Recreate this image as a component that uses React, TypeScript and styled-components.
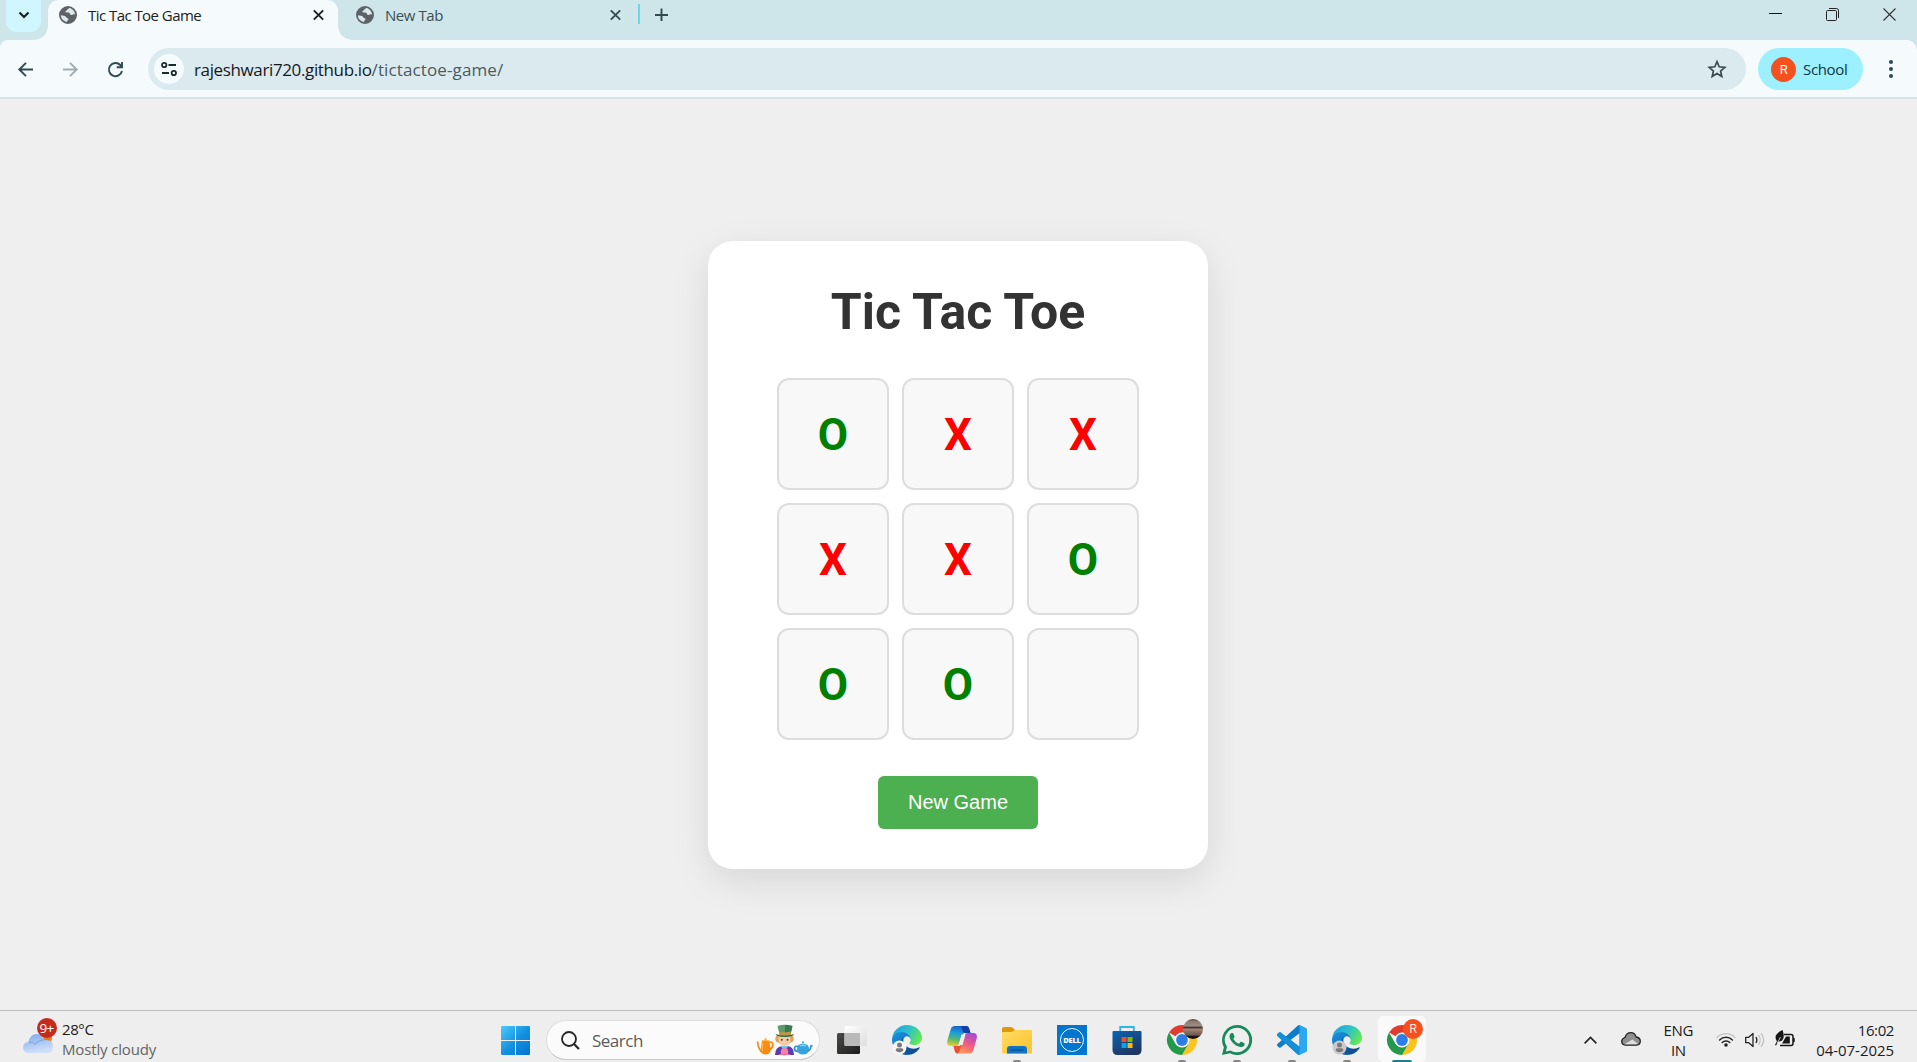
import React from "react";
import styled, { createGlobalStyle } from "styled-components";

const GlobalStyle = createGlobalStyle`
  * { box-sizing: border-box; }
  body { margin: 0; background: #efefef; overflow: hidden; }
  button { border: 0; background: none; padding: 0; margin: 0; font: inherit; }
  svg { display: block; flex: none; overflow: visible; }
`;

const ui = `"Segoe UI", "Open Sans", "Noto Sans", sans-serif`;

const Screen = styled.div`
  width: 1917px;
  height: 1062px;
  display: grid;
  grid-template-rows: 40px 59px 1fr 52px;
  font-family: ${ui};
  overflow: hidden;
`;

/* Browser chrome */
const TabStrip = styled.header`
  display: flex;
  background: #cee6ea;
`;
const TabSearch = styled.button`
  width: 35px;
  height: 32px;
  margin: 0 7px 0 6px;
  border-radius: 0 0 11px 11px;
  background: #d0f6ff;
  display: grid;
  place-items: center;
  padding-bottom: 2px;
`;
const Tab = styled.div<{ $active?: boolean }>`
  position: relative;
  display: flex;
  align-items: flex-start;
  width: ${(p) => (p.$active ? 290 : 298)}px;
  height: 40px;
  padding: ${(p) => (p.$active ? "6px 14px 0 11px" : "6px 15px 0 18px")};
  background: ${(p) => (p.$active ? "#f5fafd" : "transparent")};
  border-radius: 11px 11px 0 0;
  color: ${(p) => (p.$active ? "#1b2224" : "#3b4f53")};
  &::before,
  &::after {
    content: ${(p) => (p.$active ? '""' : "none")};
    position: absolute;
    bottom: 0;
    width: 14px;
    height: 14px;
  }
  &::before {
    left: -14px;
    background: radial-gradient(circle at 0 0, transparent 13.5px, #f5fafd 14px);
  }
  &::after {
    right: -14px;
    background: radial-gradient(circle at 100% 0, transparent 13.5px, #f5fafd 14px);
  }
`;
const TabTitle = styled.span<{ $spacing: number }>`
  flex: 1;
  margin-left: 11px;
  font-size: 15px;
  line-height: 18px;
  letter-spacing: ${(p) => p.$spacing}px;
  white-space: nowrap;
`;
const CloseSlot = styled.span`
  padding-top: 4px;
`;
const Divider = styled.span`
  width: 2px;
  height: 20px;
  margin: 4px 15px 0 2px;
  background: #71d5e8;
`;
const PlusSlot = styled.span`
  padding-top: 8px;
`;
const WindowButtons = styled.div`
  display: flex;
  gap: 44px;
  margin-left: auto;
  padding: 8px 21px 0 0;
`;
const Toolbar = styled.nav`
  display: flex;
  align-items: center;
  height: 59px;
  padding: 1px 21px 0 18px;
  background: #f5fafd;
  border-bottom: 2px solid #d8e5e8;
  border-radius: 8px 11px 0 0;
`;
const ToolbarBack = styled.div`
  background: #cee6ea;
`;
const NavIcons = styled.div`
  display: flex;
  align-items: center;
  gap: 30px;
  margin-right: 25px;
`;
const AddressBar = styled.div`
  display: flex;
  align-items: center;
  width: 1598px;
  height: 42px;
  padding: 0 19px 0 6px;
  border-radius: 21px;
  background: #dbeaef;
`;
const SiteButton = styled.span`
  display: grid;
  place-items: center;
  width: 30px;
  height: 30px;
  border-radius: 50%;
  background: #f5fafd;
`;
const Url = styled.span`
  flex: 1;
  margin-left: 10px;
  padding-top: 1px;
  font-size: 17px;
  letter-spacing: -0.37px;
  color: #15191b;
  span {
    color: #4b5a5e;
    letter-spacing: 0.12px;
  }
`;
const Profile = styled.button`
  display: flex;
  align-items: center;
  width: 105px;
  height: 42px;
  margin: 0 auto 0 12px;
  padding-left: 13px;
  border-radius: 21px;
  background: #9df0ff;
  color: #0c3840;
  font-size: 15px;
  letter-spacing: -0.35px;
`;
const Avatar = styled.span`
  display: grid;
  place-items: center;
  width: 25px;
  height: 25px;
  margin-right: 7px;
  border-radius: 50%;
  background: #f4511e;
  color: #fff;
  font: 13px Roboto, sans-serif;
`;

/* Game */
const Page = styled.main`
  display: flex;
  justify-content: center;
  align-items: flex-start;
  padding: 142px 1px 0 0;
  background: #efefef;
`;
const Card = styled.section`
  display: flex;
  flex-direction: column;
  align-items: center;
  width: 500px;
  height: 628px;
  padding-top: 39px;
  border-radius: 25px;
  background: #fff;
  box-shadow: 0 12px 38px rgba(0, 0, 0, 0.1);
`;
const Title = styled.h1`
  margin: 0 0 33px;
  font: 700 50px/65px Roboto, sans-serif;
  color: #333;
`;
const Board = styled.div`
  display: grid;
  grid-template-columns: repeat(3, 112px);
  grid-auto-rows: 112px;
  gap: 13px;
`;
const Cell = styled.div<{ $mark: string }>`
  display: grid;
  place-items: center;
  padding-top: 2px;
  border: 2px solid #ddd;
  border-radius: 12px;
  background: #f8f8f8;
  color: ${(p) => (p.$mark === "X" ? "#ff0000" : "#008000")};
  font: 700 44px/52px Roboto, sans-serif;
`;
const NewGame = styled.button`
  width: 160px;
  height: 53px;
  margin-top: 36px;
  border-radius: 6px;
  background: #4caf50;
  color: #fff;
  font: 20px "Liberation Sans", Arial, sans-serif;
`;

/* Taskbar */
const Taskbar = styled.footer`
  display: flex;
  height: 52px;
  border-top: 1px solid #bcbcbc;
  background: #eee;
  overflow: hidden;
`;
const Weather = styled.div`
  display: flex;
  width: 501px;
  padding: 7px 0 0 23px;
`;
const Stack = styled.div<{ $align?: string }>`
  display: flex;
  flex-direction: column;
  padding-top: 1px;
  text-align: ${(p) => p.$align ?? "left"};
  color: #1c1c1c;
`;
const Line = styled.span<{ $spacing?: number; $muted?: boolean }>`
  font-size: 15px;
  line-height: 20px;
  letter-spacing: ${(p) => p.$spacing ?? 0}px;
  color: ${(p) => (p.$muted ? "#646464" : "#1c1c1c")};
  white-space: nowrap;
`;
const WeatherIcon = styled.div`
  position: relative;
  width: 31px;
  margin-right: 8px;
`;
const Count = styled.span`
  position: absolute;
  left: 13.5px;
  top: 0;
  width: 20px;
  height: 20px;
  border-radius: 50%;
  background: #c42b1c;
  color: #fff;
  font-size: 13.5px;
  line-height: 20px;
  letter-spacing: -0.7px;
  text-align: center;
`;
const StartSlot = styled.div`
  padding-top: 15px;
`;
const SearchBox = styled.div`
  display: flex;
  align-items: center;
  width: 274px;
  height: 40px;
  margin: 9px 5px 0 16px;
  padding: 0 6px 0 14px;
  border: 1px solid #dcdcdc;
  border-bottom-color: #c8c8c8;
  border-radius: 20px;
  background: #fbfbfb;
`;
const SearchLabel = styled.span`
  flex: 1;
  margin-left: 12px;
  font-size: 17px;
  letter-spacing: -0.5px;
  color: #5c5c5c;
`;
const Apps = styled.div`
  display: flex;
  gap: 7px;
  margin-left: 3px;
`;
const AppButton = styled.div<{ $active?: boolean }>`
  position: relative;
  display: flex;
  justify-content: center;
  width: 48px;
  height: 46px;
  margin-top: 5px;
  padding-top: 9px;
  border-radius: 5px;
  background: ${(p) => (p.$active ? "#f9f9f9" : "transparent")};
`;
const Running = styled.i<{ $active?: boolean }>`
  position: absolute;
  bottom: 0;
  left: 50%;
  height: 2px;
  width: ${(p) => (p.$active ? 20 : 8)}px;
  transform: translateX(-50%);
  border-radius: 2px 2px 0 0;
  background: ${(p) => (p.$active ? "#1d7f8c" : "#868686")};
`;
const AppBadge = styled.span<{ $photo?: boolean }>`
  position: absolute;
  left: 25px;
  top: 3px;
  width: 20px;
  height: 20px;
  border-radius: 50%;
  background: ${(p) =>
    p.$photo
      ? "linear-gradient(#4b413f 0, #8d7a72 12%, #a58d82 36%, #34333a 40%, #3c4048 45%, #b58468 50%, #8b7569 62%, #6d5a50 80%, #16110f 88%)"
      : "#f4511e"};
  color: #ffe4da;
  font: 12.5px/20px Roboto, sans-serif;
  text-align: center;
`;
const Tray = styled.div`
  display: flex;
  margin-left: auto;
  padding: 8px 23px 0 0;
`;
const TraySlot = styled.div<{ $top: number; $right: number }>`
  padding-top: ${(p) => p.$top}px;
  margin-right: ${(p) => p.$right}px;
`;

const Globe = () => (
  <svg width="18" height="18" viewBox="0 0 18 18">
    <circle cx="9" cy="9" r="8.1" fill="#dce9ec" stroke="#5d6267" strokeWidth="1.8" />
    <path d="M1 9C1 5 4 1.4 9 1l1 .1c.4 1.2-.5 1.9-1.700 2.300-.4 1.300-1.900 1-1.900 2.300 0 1 2.400.5 3.800 1.100 1.100.5.5 1.900 1.800 2.100 1.600.2 2.600-.9 4.500-.5C17 13 14 16.500 10 17l-2-.3c-.2-1.600.6-2 1.500-3.100-.1-1.500-1.600-1.300-2.200-2.400C6.500 9.600 4 9.900 1 9z" fill="#5d6267" />
  </svg>
);
const Cross = ({ c, w = 1.9 }: { c: string; w?: number }) => (
  <svg width="11" height="11" viewBox="0 0 11 11">
    <path d="M.8.3l9.400 9.400M10.200.3L.8 9.700" stroke={c} strokeWidth={w} />
  </svg>
);

const Edge = ({ id, dark }: { id: string; dark?: boolean }) => (
  <svg width="30" height="30" viewBox="0 0 30 30">
    <defs>
      <linearGradient id={id + "a"} x1="0" y1=".2" x2="1" y2=".6">
        <stop offset="0" stopColor="#1f9fe0" />
        <stop offset=".5" stopColor="#2fc2c8" />
        <stop offset="1" stopColor="#66e84f" />
      </linearGradient>
      <linearGradient id={id + "b"} x1=".2" y1="0" x2=".6" y2="1">
        <stop offset="0" stopColor="#1b93dd" />
        <stop offset="1" stopColor="#0f5fb5" />
      </linearGradient>
      <linearGradient id={id + "c"} x1="0" y1="0" x2="1" y2="0">
        <stop offset="0" stopColor="#0c59a4" />
        <stop offset="1" stopColor="#114a8b" />
      </linearGradient>
    </defs>
    <g transform="scale(.1172)">
      <path transform="translate(-4.600 -4.900)" d="M235.680 195.460a93.730 93.730 0 0 1-10.540 4.710 101.870 101.870 0 0 1-35.900 6.460c-47.320 0-88.540-32.550-88.540-74.320A31.480 31.480 0 0 1 117.130 105c-42.800 1.800-53.800 46.400-53.800 72.530 0 73.880 68.090 81.370 82.760 81.370 7.910 0 19.840-2.300 27-4.560l1.310-.44a128.340 128.340 0 0 0 66.600-52.800 4 4 0 0 0-5.320-5.640z" fill={`url(#${id}c)`} />
      <path d="M105.730 241.380A79.200 79.200 0 0 1 83 220.080a80.720 80.720 0 0 1 29.450-120c3.120-1.470 8.450-4.130 15.540-4a32.350 32.350 0 0 1 25.690 13 31.880 31.880 0 0 1 6.360 18.660c0-.21 24.460-79.600-80-79.600-43.900 0-80 41.660-80 78.210a130.150 130.150 0 0 0 12.110 56 128 128 0 0 0 156.380 67.110 75.550 75.550 0 0 1-62.780-8z" fill={`url(#${id}b)`} />
      <path d="M152.330 148.860c-.81 1.050-3.300 2.500-3.300 5.660 0 2.610 1.700 5.120 4.720 7.230 14.380 10 41.490 8.680 41.560 8.680a59.560 59.560 0 0 0 30.270-8.350 61.380 61.380 0 0 0 30.430-52.880c.26-22.410-8-37.310-11.340-43.910C223.460 23.840 177.720 0 128 0A128 128 0 0 0 0 126.200c.48-36.540 36.800-66.050 80-66.050 3.500 0 23.460.34 42 10.070 16.340 8.580 24.900 18.940 30.850 29.210 6.180 10.670 7.280 24.150 7.280 29.520s-2.740 13.330-7.800 19.910z" fill={`url(#${id}a)`} />
    </g>
    <circle cx="7.500" cy="22.500" r="7" fill={dark ? "#cacaca" : "#f6f6f6"} />
    <circle cx="7.500" cy="20" r="2.500" fill="#7c7c7c" />
    <path d="M3.700 25c0-1.300.8-1.800 2-1.800h3.600c1.200 0 2 .5 2 1.800 0 1.200-1.500 2.200-3.800 2.200s-3.800-1-3.800-2.200z" fill="#7c7c7c" />
  </svg>
);
const Chrome = () => (
  <svg width="30" height="30" viewBox="0 0 30 30">
    <path d="M15 15L2.010 7.500A15 15 0 0 1 27.990 7.500z" fill="#e33b2e" />
    <path d="M15 7.500H28a15 15 0 0 1-13 22.500l6.500-11.250z" fill="#fcc31e" />
    <path d="M8.500 18.750L2 7.500A15 15 0 0 0 15 30l6.500-11.250z" fill="#229a49" />
    <circle cx="15" cy="15" r="7.500" fill="#fff" />
    <circle cx="15" cy="15" r="5.900" fill="#2d7de9" />
  </svg>
);
const TaskView = () => (
  <svg width="30" height="30" viewBox="0 0 30 30">
    <defs>
      <linearGradient id="tv1" x2="1" y2="1"><stop stopColor="#4a4a48" /><stop offset="1" stopColor="#1c1c1c" /></linearGradient>
      <linearGradient id="tv2" x2="1" y2="1"><stop stopColor="#fff" /><stop offset="1" stopColor="#dedede" /></linearGradient>
    </defs>
    <rect x="0" y="8" width="23" height="21" rx="1.500" fill="url(#tv1)" />
    <rect x="7.500" y="1" width="22.500" height="20" rx="1.500" fill="url(#tv2)" />
    <path d="M7.500 8H23v13H9q-1.500 0-1.500-1.500z" fill="#b9b9b9" />
  </svg>
);
const Copilot = () => (
  <svg width="30" height="30" viewBox="0 0 30 30">
    <defs>
      <linearGradient id="cp1" x1=".4" y1="0" x2=".2" y2="1"><stop stopColor="#1764d0" /><stop offset=".35" stopColor="#1aa0d5" /><stop offset=".65" stopColor="#55b872" /><stop offset="1" stopColor="#f2d024" /></linearGradient>
      <linearGradient id="cp2" x1=".8" y1="0" x2=".3" y2="1"><stop stopColor="#a14ad8" /><stop offset=".5" stopColor="#ee5a86" /><stop offset="1" stopColor="#ffa04e" /></linearGradient>
    </defs>
    <path d="M8 1h11c2 0 2.700 1 3.300 3l1.200 4h-5c-2 0-3 1-3.600 3l-2 6.500c-.7 2.500-1.600 3.500-4 3.500H4c-3.300 0-4.500-2.200-3.700-5.500L3.500 5C4.300 2 5.500 1 8 1z" fill="url(#cp1)" />
    <path d="M14 1h5c2 0 2.700 1 3.300 3l1.200 4h-5c-2 0-2.500-.8-3-2.500z" fill="#173fa8" />
    <path d="M22 28.500H11c-2 0-2.700-1-3.300-3L6.500 21h5c2 0 3-1 3.600-3l2-6.500c.7-2.500 1.600-3.500 4-3.500H26c3.300 0 4.500 2.200 3.700 5.500L26.500 24.500c-.8 3-2 4-4.500 4z" fill="url(#cp2)" />
    <path d="M6.500 21h5c1.500 0 2.500-.6 3.200-1.800L12.500 26c-.6 1.800-1.300 2.500-2.500 2.400-1.300-.2-1.900-1.200-2.300-2.900z" fill="#e8503a" />
    <path d="M14.500 9.500h4L15.500 20h-4z" fill="#eee" />
  </svg>
);
const Folder = () => (
  <svg width="30" height="30" viewBox="0 0 30 30">
    <defs><linearGradient id="fd" x2="1" y2="1"><stop stopColor="#ffdc65" /><stop offset="1" stopColor="#fcc22b" /></linearGradient></defs>
    <path d="M0 4q0-2 2-2h7q1 0 1.700.8L13 5v6H0z" fill="#dc9a09" />
    <path d="M0 8q0-1 1-1h8.500L13 5h16q1 0 1 1v21q0 1.500-1.500 1.500h-27Q0 28.500 0 27z" fill="url(#fd)" />
    <path d="M5 28.500V24q0-3 3-3h14q3 0 3 3v4.500z" fill="#1173c4" />
    <path d="M8.500 25h13" stroke="#0b4f91" strokeWidth="1.300" />
  </svg>
);
const DellTile = styled.span`
  display: grid;
  place-items: center;
  width: 30px;
  height: 30px;
  background: #0076ce;
`;
const DellRing = styled.span`
  display: grid;
  place-items: center;
  width: 24px;
  height: 24px;
  border: 1.4px solid #e8f5ff;
  border-radius: 50%;
  color: #fff;
  font: 800 7.5px/22px "Open Sans", sans-serif;
  letter-spacing: -0.2px;
`;
const Store = () => (
  <svg width="30" height="30" viewBox="0 0 30 30">
    <defs><linearGradient id="st" x2=".6" y2="1"><stop stopColor="#0864b4" /><stop offset="1" stopColor="#20355f" /></linearGradient></defs>
    <path d="M8.200 6.500V2h13.600v4.500" fill="none" stroke="#2bb5ec" strokeWidth="1.800" />
    <path d="M.5 7q0-1 1-1h27q1 0 1 1v18q0 5-5 5h-19q-5 0-5-5z" fill="url(#st)" />
    <path d="M9.500 12h5v5h-5z" fill="#f25022" /><path d="M15.500 12h5v5h-5z" fill="#7fba00" />
    <path d="M9.500 18h5v5h-5z" fill="#00a4ef" /><path d="M15.500 18h5v5h-5z" fill="#ffb900" />
  </svg>
);
const WhatsApp = () => (
  <svg width="30" height="30" viewBox="0 0 24 24" fill="#17895a">
    <path d="M17.472 14.382c-.297-.149-1.758-.867-2.030-.967-.273-.099-.471-.148-.67.150-.197.297-.767.966-.940 1.164-.173.199-.347.223-.644.075-.297-.150-1.255-.463-2.390-1.475-.883-.788-1.480-1.761-1.653-2.059-.173-.297-.018-.458.130-.606.134-.133.298-.347.446-.520.149-.174.198-.298.298-.497.099-.198.050-.371-.025-.520-.075-.149-.669-1.612-.916-2.207-.242-.579-.487-.500-.669-.510-.173-.008-.371-.010-.570-.010-.198 0-.520.074-.792.372-.272.297-1.040 1.016-1.040 2.479 0 1.462 1.065 2.875 1.213 3.074.149.198 2.096 3.200 5.077 4.487.709.306 1.262.489 1.694.625.712.227 1.360.195 1.871.118.571-.085 1.758-.719 2.006-1.413.248-.694.248-1.289.173-1.413-.074-.124-.272-.198-.570-.347" />
    <path fillRule="evenodd" d="M12 0a12 12 0 0 0-10.500 17.800L0 24l6.300-1.500A12 12 0 1 0 12 0zm0 2.200a9.800 9.800 0 1 1-5.200 18.100l-3.700.9.900-3.600A9.800 9.800 0 0 1 12 2.200z" />
  </svg>
);
const VSCode = () => (
  <svg width="30" height="30" viewBox="0 0 24 24">
    <path d="M23.150 2.587L18.210.21a1.494 1.494 0 0 0-1.705.29l-9.460 8.630-4.120-3.128a.999.999 0 0 0-1.276.057L.327 7.261A1 1 0 0 0 .326 8.740L3.899 12 .326 15.260a1 1 0 0 0 .001 1.479L1.650 17.940a.999.999 0 0 0 1.276.057l4.120-3.128 9.460 8.630a1.492 1.492 0 0 0 1.704.29l4.942-2.377A1.500 1.500 0 0 0 24 20.060V3.939a1.500 1.500 0 0 0-.85-1.352zm-5.146 14.861L10.826 12l7.178-5.448v10.896z" fill="#0c7dc8" />
    <path d="M3.900 12L.33 8.740a1 1 0 0 1 0-1.480L1.650 6.060a1 1 0 0 1 1.280-.06L18 17.450V23.800q-.8 0-1.500-.3z" fill="#1590d8" />
    <path d="M18.210.21l4.940 2.377A1.500 1.500 0 0 1 24 3.940v16.120a1.500 1.500 0 0 1-.85 1.350l-4.940 2.380q-.9.300-1.500-.2 1.300.3 1.300-1.100V1.500q0-1.200-1.300-1.100.6-.5 1.500-.19z" fill="#2ba8f2" />
  </svg>
);
const Hatter = () => (
  <svg width="56" height="32" viewBox="0 0 56 32">
    <path d="M5.500 17.300h6M8.500 15v1" stroke="#ffb02e" strokeWidth="2" strokeLinecap="round" />
    <path d="M4.800 18q3.700-2 7.400 0l1.800 7.500q-.8 5-5.500 5T3.500 26z" fill="#f98a12" />
    <path d="M6 19q-1.500 4-.5 8" fill="none" stroke="#ffb84a" strokeWidth="1.400" />
    <path d="M4.500 28Q1 24 .6 17.500M12.500 25.500q4.500-2 3-6.500-1.800-2-3.500 0" fill="none" stroke="#f98a12" strokeWidth="1.700" />
    <path d="M18 31q0-8 7-9h6q6 1 6 9z" fill="#5b3bb0" />
    <path d="M23.500 22h8l-4 5z" fill="#6cc8e8" />
    <path d="M19.500 18q-3-4 1-7h14q4 3 1 7l-3 1H22z" fill="#e3a34c" />
    <path d="M21.500 12h12v6q-1.500 4-6 4t-6-4z" fill="#f7c9a5" />
    <path d="M20.500 2q7-2.500 15 0l-2 8.500H22.500z" fill="#5b9b6c" />
    <path d="M28 1q4 0 7.500 1l-2 8.500H28z" fill="#367a50" />
    <path d="M22 7.500q6 1.500 12 0l-.5 3.500h-11z" fill="#bc9645" />
    <path d="M18.500 10q9 3 18.500 0-.5 3-9 3t-9.500-3z" fill="#286849" />
    <circle cx="24.800" cy="15.800" r="1" fill="#31505b" /><circle cx="30.500" cy="15.800" r="1" fill="#31505b" />
    <circle cx="27.500" cy="27.800" r="3.800" fill="#f780a5" />
    <path d="M22 30.500h11" stroke="#f06a96" strokeWidth="1" />
    <path d="M41.500 21q4.500-3 9 0 1.800 1.800 1.500 4.500-.5 5-6 5t-6-5q0-3 1.500-4.500z" fill="#35a3de" />
    <path d="M43 22q3-1.500 6 0" fill="none" stroke="#8ed5f4" strokeWidth="1.300" />
    <path d="M41.500 22.500q-4-1-4 2t3.500 3M51 27q2.500-1 3-5l1.500-.5M46 17.500V19" fill="none" stroke="#2d8ed0" strokeWidth="1.700" />
  </svg>
);

const board = ["O", "X", "X", "X", "X", "O", "O", "O", ""];

export default function App() {
  return (
    <Screen>
      <GlobalStyle />
      <TabStrip>
        <TabSearch>
          <svg width="12" height="8" viewBox="0 0 12 8"><path d="M1.500 1.500L6 6l4.500-4.500" fill="none" stroke="#162124" strokeWidth="2.200" /></svg>
        </TabSearch>
        <Tab $active>
          <Globe />
          <TabTitle $spacing={-0.55}>Tic Tac Toe Game</TabTitle>
          <CloseSlot><Cross c="#1b2224" /></CloseSlot>
        </Tab>
        <Tab>
          <Globe />
          <TabTitle $spacing={-0.45}>New Tab</TabTitle>
          <CloseSlot><Cross c="#344c50" /></CloseSlot>
        </Tab>
        <Divider />
        <PlusSlot>
          <svg width="13" height="13" viewBox="0 0 13 13"><path d="M6.500.5v12.500M0 7h13" stroke="#304a4f" strokeWidth="1.900" /></svg>
        </PlusSlot>
        <WindowButtons>
          <svg width="13" height="13" viewBox="0 0 13 13"><path d="M0 5.500h13" stroke="#111" /></svg>
          <svg width="13" height="13" viewBox="0 0 13 13" fill="none" stroke="#222">
            <rect x=".5" y="2.500" width="10" height="10" rx="1" />
            <path d="M3 .5h7.500q2 0 2 2V10" />
          </svg>
          <svg width="13" height="13" viewBox="0 0 13 13"><path d="M.5.5l12 12M12.500.5l-12 12" stroke="#333" strokeWidth="1.100" /></svg>
        </WindowButtons>
      </TabStrip>
      <ToolbarBack>
        <Toolbar>
          <NavIcons>
            <svg width="15" height="15" viewBox="0 0 15 15" fill="none" stroke="#2f4a50" strokeWidth="1.900"><path d="M15 7.500H1.500M8 .8L1.300 7.500 8 14.200" /></svg>
            <svg width="15" height="15" viewBox="0 0 15 15" fill="none" stroke="#a1acb0" strokeWidth="1.900"><path d="M0 7.500h13.500M7 .8l6.700 6.700L7 14.200" /></svg>
            <svg width="15" height="15" viewBox="0 0 15 15" fill="none" stroke="#2f4a50" strokeWidth="1.900"><path d="M14 9A6.600 6.600 0 1 1 12.300 3L14 4.700M14 0v5.300H8.700" /></svg>
          </NavIcons>
          <AddressBar>
            <SiteButton>
              <svg width="16" height="14" viewBox="0 0 16 14" fill="none" stroke="#1b2a2d" strokeWidth="1.800">
                <circle cx="3.200" cy="3" r="2.200" /><path d="M7.500 3H15M1 11h7" /><circle cx="12.800" cy="11" r="2.200" />
              </svg>
            </SiteButton>
            <Url>rajeshwari720.github.io<span>/tictactoe-game/</span></Url>
            <svg width="20" height="20" viewBox="0 0 20 20"><path d="M10 2.600l2.200 5.200 5.600.5-4.200 3.700 1.200 5.500-4.800-2.900-4.800 2.900 1.200-5.500-4.200-3.700 5.600-.5z" fill="none" stroke="#3b4b50" strokeWidth="1.700" /></svg>
          </AddressBar>
          <Profile><Avatar>R</Avatar>School</Profile>
          <svg width="10" height="18" viewBox="0 0 10 18" fill="#2f4a50"><circle cx="5" cy="2" r="2" /><circle cx="5" cy="9" r="2" /><circle cx="5" cy="16" r="2" /></svg>
        </Toolbar>
      </ToolbarBack>

      <Page>
        <Card>
          <Title>Tic Tac Toe</Title>
          <Board>
            {board.map((mark, i) => <Cell key={i} $mark={mark}>{mark}</Cell>)}
          </Board>
          <NewGame>New Game</NewGame>
        </Card>
      </Page>

      <Taskbar>
        <Weather>
          <WeatherIcon>
            <svg width="31" height="36" viewBox="0 0 31 36">
              <defs><linearGradient id="wc" x2=".3" y2="1"><stop stopColor="#7ba9ea" /><stop offset="1" stopColor="#cfdffa" /></linearGradient></defs>
              <circle cx="24" cy="20" r="5" fill="#f27a1a" />
              <path d="M6 35q-6-.5-6-5.500t5.500-5.500Q7 16 14 16q6 0 7.500 6 9-1 8.500 7 0 6-6 6z" fill="url(#wc)" />
              <path d="M5.500 24q5-.5 7 2.500 3-5 9-4.500" fill="none" stroke="#6b97df" strokeWidth=".8" />
            </svg>
            <Count>9+</Count>
          </WeatherIcon>
          <Stack>
            <Line $spacing={-0.4}>28°C</Line>
            <Line $spacing={-0.15} $muted>Mostly cloudy</Line>
          </Stack>
        </Weather>
        <StartSlot>
          <svg width="29" height="29" viewBox="0 0 29 29">
            <defs><linearGradient id="ws" gradientUnits="userSpaceOnUse" x1="0" y1="0" x2="29" y2="29"><stop stopColor="#4ccbfd" /><stop offset=".5" stopColor="#1593e0" /><stop offset="1" stopColor="#0371d0" /></linearGradient></defs>
            <path d="M1 0h13v14H0V1q0-1 1-1zM15 0h13q1 0 1 1v13H15zM0 15h14v14H1q-1 0-1-1zM15 15h14v13q0 1-1 1H15z" fill="url(#ws)" />
          </svg>
        </StartSlot>
        <SearchBox>
          <svg width="19" height="19" viewBox="0 0 19 19" fill="none" stroke="#252525"><circle cx="8" cy="8" r="7" strokeWidth="1.800" /><path d="M13 13l5 5" strokeWidth="2.200" /></svg>
          <SearchLabel>Search</SearchLabel>
          <Hatter />
        </SearchBox>
        <Apps>
          <AppButton><TaskView /></AppButton>
          <AppButton><Edge id="e1" /></AppButton>
          <AppButton><Copilot /></AppButton>
          <AppButton><Folder /><Running /></AppButton>
          <AppButton><DellTile><DellRing>DELL</DellRing></DellTile></AppButton>
          <AppButton><Store /></AppButton>
          <AppButton><Chrome /><AppBadge $photo /><Running /></AppButton>
          <AppButton><WhatsApp /><Running /></AppButton>
          <AppButton><VSCode /><Running /></AppButton>
          <AppButton><Edge id="e2" dark /><Running /></AppButton>
          <AppButton $active><Chrome /><AppBadge>R</AppBadge><Running $active /></AppButton>
        </Apps>
        <Tray>
          <TraySlot $top={17} $right={24}>
            <svg width="13" height="8" viewBox="0 0 13 8"><path d="M.6 7.400L6.500 1.500l5.900 5.900" fill="none" stroke="#222" strokeWidth="1.600" /></svg>
          </TraySlot>
          <TraySlot $top={13} $right={23}>
            <svg width="20" height="14" viewBox="0 0 20 14">
              <path d="M4.500 13.200Q.7 12.800.7 9.300.8 6.500 4 5.500 5.500.7 10 .7q3.800 0 5.200 4.300 4 .5 4.100 4.300 0 3.500-3.800 3.900z" fill="#8f8f8f" />
              <path d="M3 12.500l8.500-5L17 12l-1.500 1H4.500z" fill="#dedede" />
              <path d="M4.500 13.200Q.7 12.800.7 9.300.8 6.500 4 5.500 5.500.7 10 .7q3.800 0 5.200 4.300 4 .5 4.100 4.300 0 3.500-3.800 3.900z" fill="none" stroke="#222" strokeWidth="1.300" />
            </svg>
          </TraySlot>
          <TraySlot $top={0} $right={23}>
            <Stack $align="center"><Line $spacing={-0.3}>ENG</Line><Line $spacing={-0.3}>IN</Line></Stack>
          </TraySlot>
          <TraySlot $top={13} $right={9}>
            <svg width="20" height="15" viewBox="0 0 20 15" fill="none" strokeLinecap="round">
              <path d="M1 5.500a12.500 12.500 0 0 1 18 0" stroke="#c4c4c4" strokeWidth="1.400" />
              <path d="M3.600 8a9 9 0 0 1 12.800 0M6.200 10.500a5.500 5.500 0 0 1 7.600 0" stroke="#222" strokeWidth="1.500" />
              <circle cx="10" cy="13" r="1.800" fill="#222" />
            </svg>
          </TraySlot>
          <TraySlot $top={13} $right={10}>
            <svg width="20" height="16" viewBox="0 0 20 16" fill="none">
              <path d="M.7 5.300h3L8 1.500v13l-4.300-3.800h-3z" stroke="#222" strokeWidth="1.300" strokeLinejoin="round" />
              <path d="M11 5q1.800 3 0 6" stroke="#222" strokeWidth="1.300" />
              <path d="M13.500 3q3.500 5 0 10M16 1.200q5.500 6.800 0 13.600" stroke="#bebebe" strokeWidth="1.200" />
            </svg>
          </TraySlot>
          <TraySlot $top={11} $right={21}>
            <svg width="20" height="17" viewBox="0 0 20 17">
              <path d="M9 4.500h7q2 0 2 2v7q0 2-2 2H5" fill="none" stroke="#161616" strokeWidth="1.500" />
              <path d="M11 6.500h3.800v7H7z" fill="#161616" />
              <path d="M18 8h1.700v4H18z" fill="#161616" />
              <path d="M7.500 0q2 5 .8 8.500Q7 12 3.500 11.500l-2.500 4-1-.5 2-4Q0 9 .8 5.500 3 2 7.500 0z" fill="#161616" />
              <path d="M2 13.500L5.500 7" stroke="#eee" strokeWidth=".8" />
            </svg>
          </TraySlot>
          <Stack $align="right">
            <Line $spacing={-0.4}>16:02</Line>
            <Line $spacing={-0.05}>04-07-2025</Line>
          </Stack>
        </Tray>
      </Taskbar>
    </Screen>
  );
}
